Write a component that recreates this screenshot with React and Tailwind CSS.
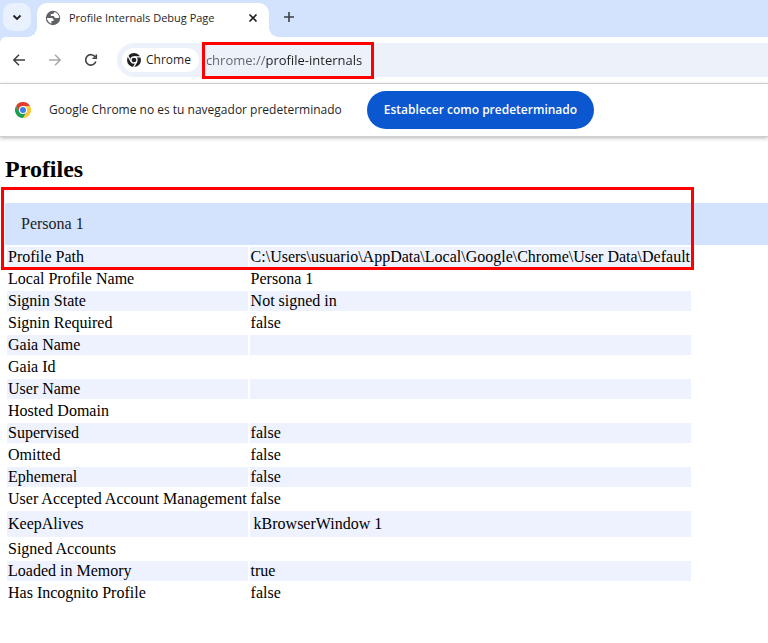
import React from "react";

const profile = [
  ["Profile Path", "C:\\Users\\usuario\\AppData\\Local\\Google\\Chrome\\User Data\\Default"],
  ["Local Profile Name", "Persona 1"],
  ["Signin State", "Not signed in"],
  ["Signin Required", "false"],
  ["Gaia Name", ""],
  ["Gaia Id", ""],
  ["User Name", ""],
  ["Hosted Domain", ""],
  ["Supervised", "false"],
  ["Omitted", "false"],
  ["Ephemeral", "false"],
  ["User Accepted Account Management", "false"],
  ["KeepAlives", [["kBrowserWindow", "1"]]],
  ["Signed Accounts", ""],
  ["Loaded in Memory", "true"],
  ["Has Incognito Profile", "false"],
];

function GlobeIcon() {
  return (
    <svg viewBox="0 0 16 16" className="size-4 shrink-0" aria-hidden="true">
      <circle cx="8" cy="8" r="7.2" fill="#5f6368" />
      <path d="M1.9 8.1h4.2c1.6 0 2.5.8 2.5 2.1v.8H6.4v2.7C4 13 2.2 10.8 1.9 8.1z" fill="#fff" />
      <path d="M9.3 2.1c-.2 1.3-.7 1.9-2 1.9H5.8v1.9h3.1c.3 1.4 1 2.2 2.3 2.2h2.9C14.1 5 12.1 2.6 9.3 2.1z" fill="#fff" />
    </svg>
  );
}

function ChromeMonoIcon() {
  return (
    <svg viewBox="0 0 16 16" className="size-4 shrink-0" aria-hidden="true">
      <circle cx="8" cy="8" r="7" fill="#202124" />
      <circle cx="8" cy="8" r="3" fill="none" stroke="#fff" strokeWidth="1.3" />
      <path d="M8 4.8h7M5.2 9.6L1.7 3.6M10.8 9.6l-3.5 6" stroke="#fff" strokeWidth="1.2" fill="none" />
    </svg>
  );
}

function ChromeIcon() {
  return (
    <svg viewBox="0 0 48 48" className="size-4 shrink-0" aria-hidden="true">
      <path d="M24 12h20.8A24 24 0 0 0 3.2 12l10.4 18z" fill="#e33b2e" />
      <path d="M34.4 30L24 48A24 24 0 0 0 44.8 12H24z" fill="#fcc934" />
      <path d="M13.6 30L3.2 12A24 24 0 0 0 24 48l10.4-18z" fill="#1e9e50" />
      <circle cx="24" cy="24" r="12" fill="#fff" />
      <circle cx="24" cy="24" r="9" fill="#3b7ded" />
    </svg>
  );
}

function LineIcon({ d, className }) {
  return (
    <svg viewBox="0 0 16 16" className={className} fill="none" stroke="currentColor" aria-hidden="true">
      <path d={d} />
    </svg>
  );
}

function TabStrip() {
  return (
    <div className="flex h-[37px] bg-[#d3e3fd]">
      <button aria-label="Buscar pestañas" className="mt-[3px] ml-[3px] flex size-7 shrink-0 items-center justify-center rounded-[10px] bg-[#e9f1fe] text-[#1f1f1f]">
        <LineIcon d="M4.5 6.5L8 10l3.500-3.500" className="size-4 stroke-[1.8]" />
      </button>
      <span className="-ml-1 size-[10px] shrink-0 self-end bg-[radial-gradient(circle_at_0_0,transparent_10px,#fff_10px)]" />
      <div className="mt-[3px] flex w-[232px] shrink-0 items-center rounded-t-[10px] bg-white px-2 pb-1">
        <GlobeIcon />
        <span className="ml-2 flex-1 text-[11px] leading-4 whitespace-nowrap text-[#1f1f1f]">Profile Internals Debug Page</span>
        <button aria-label="Cerrar" className="flex size-4 items-center justify-center text-[#1f1f1f]">
          <LineIcon d="M4.5 4.500l7 7m0-7l-7 7" className="size-4 stroke-[1.7]" />
        </button>
      </div>
      <span className="size-[10px] shrink-0 self-end bg-[radial-gradient(circle_at_100%_0,transparent_10px,#fff_10px)]" />
      <button aria-label="Nueva pestaña" className="mt-[9px] ml-[2px] size-4 text-[#3c4043]">
        <LineIcon d="M8 3v10M3 8h10" className="size-4 stroke-[1.6]" />
      </button>
    </div>
  );
}

function Toolbar() {
  return (
    <div className="bg-[#d3e3fd]">
      <div className="flex h-[47px] items-center rounded-tl-[6px] border-b border-[#dcdcdc] bg-white pl-[11px]">
        <button aria-label="Atrás" className="size-4 text-[#3c4043]">
          <LineIcon d="M14 8H2.800M8 2.800L2.800 8L8 13.200" className="size-4 stroke-[1.5]" />
        </button>
        <button aria-label="Adelante" className="ml-5 size-4 text-[#a6a8ab]">
          <LineIcon d="M2 8h11.200M8 2.800L13.200 8L8 13.200" className="size-4 stroke-[1.5]" />
        </button>
        <button aria-label="Recargar" className="ml-5 size-4 text-[#3c4043]">
          <LineIcon d="M12.800 9.500A5.200 5.200 0 1 1 12.200 5M13.300 2.500V6.300H9.500" className="size-4 stroke-[1.6]" />
        </button>
        <div className="ml-[18px] flex h-[34px] min-w-0 flex-1 items-center rounded-l-full bg-[#ecf1fa] pl-[5px]">
          <button className="flex h-6 shrink-0 items-center gap-1 rounded-full bg-white px-1 pr-2 text-xs font-medium text-[#1f1f1f]">
            <ChromeMonoIcon />
            Chrome
          </button>
          <div className="ml-[3px] flex h-[37px] w-[172px] shrink-0 items-center border-[3px] border-[#ff0000] pl-[1px]">
            <input
              aria-label="Dirección"
              defaultValue="chrome://profile-internals"
              className="w-full bg-[linear-gradient(to_right,#5f6368_60px,#1f1f1f_60px)] bg-clip-text pt-px text-[13px] text-transparent outline-none"
            />
          </div>
        </div>
      </div>
    </div>
  );
}

function InfoBar() {
  return (
    <div className="flex h-[53px] items-center border-b border-[#cfcfcf] bg-white pl-[15px] shadow-[0_1px_4px_rgba(0,0,0,0.3)]">
      <ChromeIcon />
      <p className="ml-[18px] text-xs whitespace-nowrap text-[#1f1f1f]">Google Chrome no es tu navegador predeterminado</p>
      <button className="ml-[25px] h-[38px] rounded-full bg-[#0b57d0] px-[17px] text-xs font-semibold whitespace-nowrap text-white">
        Establecer como predeterminado
      </button>
    </div>
  );
}

function Value({ value }) {
  if (!Array.isArray(value)) return value;
  return (
    <table className="border-separate border-spacing-[2px]">
      <tbody>
        {value.map(([name, count]) => (
          <tr key={name}>
            <td className="p-px">{name} {count}</td>
          </tr>
        ))}
      </tbody>
    </table>
  );
}

export default function App() {
  return (
    <div className="min-h-screen overflow-x-hidden bg-white font-['Open_Sans','Noto_Sans',sans-serif]">
      <header>
        <TabStrip />
        <Toolbar />
        <InfoBar />
      </header>
      <main className="pt-[18px] pl-[5px] font-['Liberation_Serif',serif] text-base leading-[18px] text-black">
        <h1 className="text-2xl leading-7 font-bold">Profiles</h1>
        <section className="relative mt-5">
          <h2 className="bg-[#d3e3fd] px-4 py-3 text-[#202124]">Persona 1</h2>
          <table className="border-separate border-spacing-[2px] whitespace-nowrap">
            <tbody>
              {profile.map(([label, value]) => (
                <tr key={label} className="h-5 odd:bg-[#eef2ff]">
                  <th scope="row" className="p-px text-left font-normal">{label}</th>
                  <td className="p-px"><Value value={value} /></td>
                </tr>
              ))}
            </tbody>
          </table>
          <div className="pointer-events-none absolute -top-4 -left-1 h-[83px] w-[693px] border-[3px] border-[#ff0000]" />
        </section>
      </main>
    </div>
  );
}
